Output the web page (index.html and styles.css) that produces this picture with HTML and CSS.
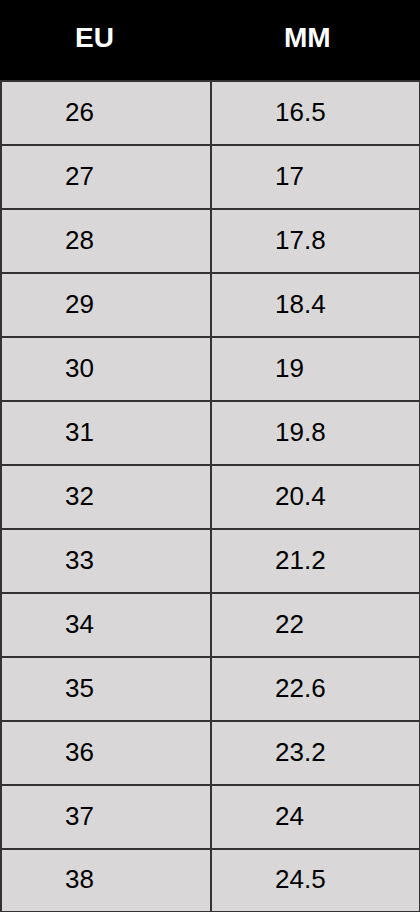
FILE: index.html
```html
<!DOCTYPE html>
<html lang="en">
<head>
<meta charset="utf-8">
<title>Size chart</title>
<link rel="stylesheet" href="styles.css">
</head>
<body>
<table class="size-table">
  <thead>
    <tr class="head-row">
      <th class="cell-a">EU</th>
      <th class="cell-b">MM</th>
    </tr>
  </thead>
  <tbody>
    <tr><td class="cell-a">26</td><td class="cell-b">16.5</td></tr>
    <tr><td class="cell-a">27</td><td class="cell-b">17</td></tr>
    <tr><td class="cell-a">28</td><td class="cell-b">17.8</td></tr>
    <tr><td class="cell-a">29</td><td class="cell-b">18.4</td></tr>
    <tr><td class="cell-a">30</td><td class="cell-b">19</td></tr>
    <tr><td class="cell-a">31</td><td class="cell-b">19.8</td></tr>
    <tr><td class="cell-a">32</td><td class="cell-b">20.4</td></tr>
    <tr><td class="cell-a">33</td><td class="cell-b">21.2</td></tr>
    <tr><td class="cell-a">34</td><td class="cell-b">22</td></tr>
    <tr><td class="cell-a">35</td><td class="cell-b">22.6</td></tr>
    <tr><td class="cell-a">36</td><td class="cell-b">23.2</td></tr>
    <tr><td class="cell-a">37</td><td class="cell-b">24</td></tr>
    <tr class="last-row"><td class="cell-a">38</td><td class="cell-b">24.5</td></tr>
  </tbody>
</table>
</body>
</html>
```
FILE: styles.css
```css
html, body {
  margin: 0;
  padding: 0;
  background: #ffffff;
}

.size-table {
  width: 420px;
  border-collapse: separate;
  border-spacing: 0;
  table-layout: fixed;
  font-family: "Liberation Sans", Arial, sans-serif;
}

.size-table th,
.size-table td {
  box-sizing: border-box;
  text-align: left;
  vertical-align: middle;
  padding: 0;
}

.size-table .cell-a { width: 212px; }
.size-table .cell-b { width: 208px; }

.head-row th {
  height: 80px;
  background: #000000;
  color: #ffffff;
  font-size: 28px;
  font-weight: bold;
  line-height: 32px;
  padding-bottom: 4px;
}

.head-row .cell-a { padding-left: 75px; }
.head-row .cell-b { padding-left: 72px; }

.size-table td {
  height: 64px;
  background: #d9d7d8;
  color: #000000;
  font-size: 26px;
  line-height: 30px;
  border-top: 2px solid #333333;
  padding-bottom: 3px;
}

.size-table td.cell-a {
  border-left: 2px solid #333333;
  border-right: 2px solid #333333;
  padding-left: 63px;
}

.size-table td.cell-b {
  border-right: 1px solid #333333;
  padding-left: 63px;
}

.last-row td {
  border-bottom: 1px solid #333333;
}
```
